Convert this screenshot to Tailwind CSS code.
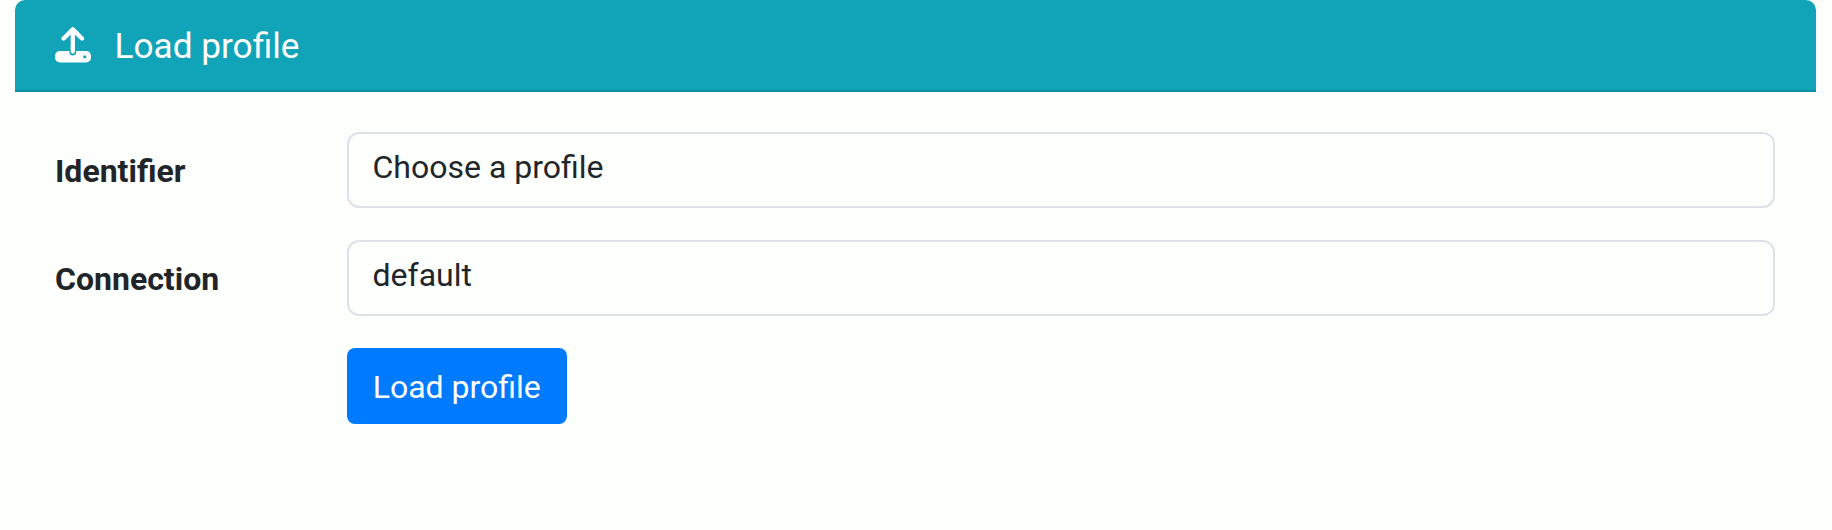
<!DOCTYPE html>
<html lang="en">
<head>
<meta charset="utf-8">
<title>Load profile</title>
<script src="https://cdn.jsdelivr.net/npm/@tailwindcss/browser@4"></script>
</head>
<body class="h-[530px] overflow-hidden bg-[#fdfffd] font-[Roboto,sans-serif] text-[32px] leading-[48px] text-[#212529]">
<main class="ml-[15px] w-[1800.5px]">
  <header class="flex h-[92px] items-center rounded-t-[10px] border-b-2 border-[#0a8fa3] bg-[#11a4b9] pl-[39.5px] text-white">
    <svg class="size-9" viewBox="0 0 36 36" fill="none" aria-hidden="true">
      <rect y="24" width="36" height="11.5" rx="4.8" fill="#fff"/>
      <circle cx="29.8" cy="29.8" r="1.6" fill="#11a4b9"/>
      <path d="M17.8 20V25" stroke="#11a4b9" stroke-width="6.8" stroke-linecap="round"/>
      <path d="M17.8 2.8V24.5M8.6 11.5L17.8 2.4L27 11.5" stroke="#fff" stroke-width="4.3" stroke-linecap="round" stroke-linejoin="round"/>
    </svg>
    <h1 class="ml-6 pt-[2px] text-[35.2px]">Load profile</h1>
  </header>
  <form class="flex flex-col gap-8 pt-10 pr-[40.5px] pl-10">
    <div class="flex h-19 items-center">
      <label class="w-[292px] shrink-0 pt-[2px] font-bold">Identifier</label>
      <div class="h-19 grow rounded-xl border-2 border-[#dee2e6] pt-[9px] pl-[23.5px]">Choose a profile</div>
    </div>
    <div class="flex h-19 items-center">
      <label class="w-[292px] shrink-0 pt-[2px] font-bold">Connection</label>
      <div class="h-19 grow rounded-xl border-2 border-[#dee2e6] pt-[9px] pl-[23.5px]">default</div>
    </div>
    <button type="button" class="ml-[291.5px] h-[76.4px] w-[220.5px] rounded-lg bg-[#007bff] pt-[2px] text-white">Load profile</button>
  </form>
</main>
</body>
</html>
